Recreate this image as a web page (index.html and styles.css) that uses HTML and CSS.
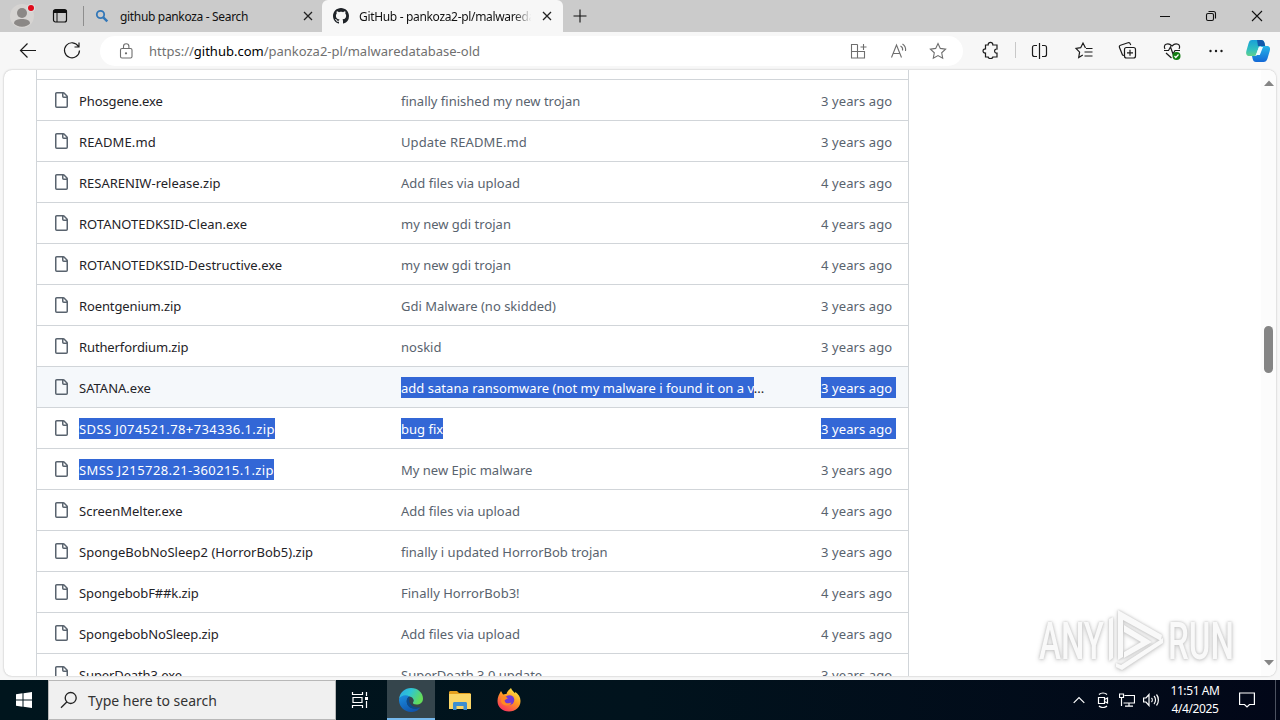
FILE: index.html
```html
<!DOCTYPE html>
<html lang="en">
<head>
    <meta charset="UTF-8">
    <meta name="viewport" content="width=device-width, initial-scale=1.0">
    <title>GitHub - pankoza2-pl/malwaredatabase-old</title>
    <link rel="stylesheet" href="styles.css">
</head>
<body>
    <svg class="defs" width="0" height="0">
        <symbol id="file" viewBox="0 0 16 16">
            <path d="M2 1.75C2 .784 2.784 0 3.75 0h6.586c.464 0 .909.184 1.237.513l2.914 2.914c.329.328.513.773.513 1.237v9.586A1.75 1.75 0 0 1 13.25 16h-9.5A1.75 1.75 0 0 1 2 14.25Zm1.75-.25a.25.25 0 0 0-.25.25v12.5c0 .138.112.25.25.25h9.5a.25.25 0 0 0 .25-.25V6h-2.75A1.75 1.75 0 0 1 9 4.25V1.5Zm6.75.062V4.25c0 .138.112.25.25.25h2.688l-.011-.013-2.914-2.914-.013-.011Z"/>
        </symbol>
    </svg>

    <div class="tabstrip">
        <svg class="profile" width="28" height="32" viewBox="0 0 28 32">
            <circle cx="14" cy="16" r="12" fill="#d6d4d2"/>
            <circle cx="14" cy="13" r="5" fill="#8b8886"/>
            <path d="M6 23.500c0-3.500 4-4.500 8-4.500s8 1 8 4.500c-1.500 2-4.500 3.200-8 3.200s-6.500-1.200-8-3.200z" fill="#8b8886"/>
            <circle cx="23" cy="8" r="4" fill="#dedede"/>
            <circle cx="23" cy="8" r="3" fill="#e00b1c"/>
        </svg>
        <svg class="workspace" width="16" height="16" viewBox="0 0 16 16" fill="none" stroke="#111">
            <rect x="1.500" y="1.500" width="13" height="12.500" rx="2" stroke-width="1.200"/>
            <path d="M1.500 3.500h13" stroke-width="3"/>
            <path d="M5 4v10"/>
        </svg>
        <div class="strip-line"></div>
        <div class="tab">
            <svg width="16" height="16" viewBox="0 0 16 16" fill="none" stroke="#3277b8">
                <circle cx="6.500" cy="6.500" r="3.700" stroke-width="1.800"/>
                <path d="M9.300 9.300l4 4" stroke-width="2.400"/>
            </svg>
            <span class="tab-title">github pankoza - Search</span>
            <svg class="tab-close" width="10" height="10" viewBox="0 0 10 10" stroke="#222" stroke-width="1.300"><path d="M1 1l8 8M9 1l-8 8"/></svg>
        </div>
        <div class="tab active">
            <svg width="16" height="16" viewBox="0 0 16 16" fill="#1f2328">
                <path d="M8 0C3.58 0 0 3.58 0 8c0 3.54 2.29 6.53 5.47 7.59.4.07.55-.17.55-.38 0-.19-.01-.82-.01-1.49-2.01.37-2.53-.49-2.69-.94-.09-.23-.48-.94-.82-1.13-.28-.15-.68-.52-.01-.53.63-.01 1.08.58 1.23.82.72 1.21 1.87.87 2.33.66.07-.52.28-.87.51-1.07-1.78-.2-3.64-.89-3.64-3.95 0-.87.31-1.59.82-2.15-.08-.2-.36-1.02.08-2.12 0 0 .67-.21 2.2.82.64-.18 1.32-.27 2-.27s1.36.09 2 .27c1.53-1.04 2.2-.82 2.2-.82.44 1.1.16 1.92.08 2.12.51.56.82 1.27.82 2.15 0 3.07-1.87 3.75-3.65 3.95.29.25.54.73.54 1.48 0 1.07-.01 1.93-.01 2.2 0 .21.15.46.55.38A8.01 8.01 0 0 0 16 8c0-4.42-3.58-8-8-8z"/>
            </svg>
            <span class="tab-title fade">GitHub - pankoza2-pl/malwaredatabase-old</span>
            <svg class="tab-close" width="10" height="10" viewBox="0 0 10 10" stroke="#222" stroke-width="1.300"><path d="M1 1l8 8M9 1l-8 8"/></svg>
        </div>
        <svg class="new-tab" width="14" height="14" viewBox="0 0 14 14" stroke="#111" stroke-width="1.100"><path d="M7 .5v13M.5 7h13"/></svg>
        <div class="window-buttons">
            <svg width="46" height="32" viewBox="0 0 46 32"><path d="M18 16.500h10" stroke="#111"/></svg>
            <svg width="46" height="32" viewBox="0 0 46 32" fill="none" stroke="#111" stroke-width="1.100">
                <rect x="18.500" y="13.500" width="7" height="7" rx="1.500"/>
                <path d="M20.500 11.500h5a2 2 0 0 1 2 2v5"/>
            </svg>
            <svg width="46" height="32" viewBox="0 0 46 32" stroke="#111" stroke-width="1.100"><path d="M18 11l10 10M28 11l-10 10"/></svg>
        </div>
    </div>

    <div class="toolbar">
        <svg class="tool" viewBox="0 0 44 36"><path d="M30 18.500H14.500M21.500 11.500l-7 7 7 7"/></svg>
        <svg class="tool" viewBox="0 0 44 36"><path d="M28.500 14.500a7.500 7.500 0 1 0 1 4M29 10.500v4.500h-4.500"/></svg>
        <div class="address">
            <svg class="lock" width="20" height="20" viewBox="0 0 20 20">
                <rect x="4.500" y="7.500" width="11.500" height="9.500" rx="1.500"/>
                <path d="M7.500 7.500V5.500a2.700 2.700 0 0 1 5.400 0v2"/>
                <circle cx="10" cy="12.300" r=".6"/>
            </svg>
            <span class="url">https://<b>github.com</b>/pankoza2-pl/malwaredatabase-old</span>
            <svg class="small-tool" viewBox="0 0 40 30">
                <path d="M19.500 8.500h-6v13.500h13v-6.500h-13M19.500 8.500V22M25.500 8v6M22.500 11h6"/>
            </svg>
            <svg class="small-tool" viewBox="0 0 40 30">
                <path d="M13.500 21.500l5-12.500 5 12.500M15.200 17.500h6.600M22.500 10a4 4 0 0 1 2 4.500M24.500 8a7 7 0 0 1 3 7"/>
            </svg>
            <svg class="small-tool" viewBox="0 0 40 30">
                <path d="M20 7.500l2.300 4.900 5.300.7-3.900 3.700 1 5.400-4.700-2.600-4.700 2.600 1-5.400-3.900-3.700 5.300-.7z"/>
            </svg>
        </div>
        <svg class="tool extensions" viewBox="0 0 44 36">
            <path d="M16.500 13h2.700c-.4-3.600 5-3.600 4.600 0h4.200v4c-3.200-.4-3.200 4.600 0 4.200v3.800h-4.200c.2 2-4.600 2-4.600 0h-2.700v-4c-3.300.4-3.300-4.400 0-4z"/>
        </svg>
        <div class="tool-line"></div>
        <svg class="tool" viewBox="0 0 44 36">
            <path d="M19 13.500h-2.500a2 2 0 0 0-2 2v7a2 2 0 0 0 2 2H19M24 13.500h2.500a2 2 0 0 1 2 2v7a2 2 0 0 1-2 2H24M21.500 11v16"/>
        </svg>
        <svg class="tool" viewBox="0 0 44 36">
            <path d="M23.500 16l-2.500-5-2.300 4.700-4.700.8 3.600 3.700-.9 5.300 4.100-2.500M24 16.500h6.500M22.500 20h8M22.500 24h8"/>
        </svg>
        <svg class="tool" viewBox="0 0 44 36">
            <path d="M18 23.500l-1.500-.5-3-7.500c-.4-1 0-2 1-2.300l7.500-2.400c1-.3 2 .2 2.300 1.100l.4 1.100"/>
            <rect x="18.500" y="15.500" width="11" height="10.500" rx="2"/>
            <path d="M24 17.800v6M21 20.800h6"/>
        </svg>
        <svg class="tool" viewBox="0 0 44 36">
            <path d="M15 17c-2.500-4.500 3-7 7-3 4-4 9.500-1.500 7 3M14 18.500h4.500l2-3.500 2.500 7 2-3.500h5M16 21l5.500 5"/>
            <circle class="ok" cx="26.500" cy="24" r="4"/>
            <path class="check" d="M24.500 24l1.300 1.500 2.700-3"/>
        </svg>
        <svg class="tool dots" viewBox="0 0 44 36">
            <circle cx="16.500" cy="19" r="1.200"/><circle cx="22" cy="19" r="1.200"/><circle cx="27.500" cy="19" r="1.200"/>
        </svg>
        <svg class="copilot" width="40" height="36" viewBox="0 0 40 36">
            <defs>
                <linearGradient id="cpLeft" x1="0" y1="0" x2="0" y2="1"><stop offset="0" stop-color="#18a0d8"/><stop offset=".6" stop-color="#31c0bf"/><stop offset="1" stop-color="#62d08b"/></linearGradient>
                <linearGradient id="cpRight" x1="0" y1="0" x2="0" y2="1"><stop offset="0" stop-color="#25b5e8"/><stop offset="1" stop-color="#1368d6"/></linearGradient>
            </defs>
            <path d="M14 8h9c2 0 3 1 3.500 3l.7 3H23c-1.500 0-2.200 1-2.700 2.500L18.500 22c-.5 1.300-1 2-2.500 2h-4.500c-3 0-4-2-3-5.500l2-7C11.200 9 12 8 14 8z" fill="url(#cpLeft)"/>
            <path d="M19 8h4c2 0 3 1 3.500 3l.7 3H20z" fill="#1259ab"/>
            <path d="M27 14h2c3 0 3.500 2.500 2.700 5l-2.200 7.500c-.8 2.500-2 3.500-4 3.500h-7.500c-2 0-2.800-1-3.300-3l-.7-3H17c1.500 0 2-.8 2.500-2l1.900-5.500c.5-1.500 1.100-2.500 2.600-2.500z" fill="url(#cpRight)"/>
            <path d="M21 15h4l-3.200 8h-4z" fill="#f0fbff"/>
        </svg>
    </div>

    <div class="page">
        <div class="files">
            <div class="row stub"></div>
            <div class="row"><svg><use href="#file"/></svg><span class="name tight">Phosgene.exe</span><span class="message">finally finished my new trojan</span><span class="age">3 years ago</span></div>
            <div class="row"><svg><use href="#file"/></svg><span class="name loose">README.md</span><span class="message loose">Update README.md</span><span class="age">3 years ago</span></div>
            <div class="row"><svg><use href="#file"/></svg><span class="name">RESARENIW-release.zip</span><span class="message">Add files via upload</span><span class="age">4 years ago</span></div>
            <div class="row"><svg><use href="#file"/></svg><span class="name">ROTANOTEDKSID-Clean.exe</span><span class="message">my new gdi trojan</span><span class="age">4 years ago</span></div>
            <div class="row"><svg><use href="#file"/></svg><span class="name">ROTANOTEDKSID-Destructive.exe</span><span class="message">my new gdi trojan</span><span class="age">4 years ago</span></div>
            <div class="row"><svg><use href="#file"/></svg><span class="name tight">Roentgenium.zip</span><span class="message">Gdi Malware (no skidded)</span><span class="age">3 years ago</span></div>
            <div class="row"><svg><use href="#file"/></svg><span class="name tight">Rutherfordium.zip</span><span class="message">noskid</span><span class="age">3 years ago</span></div>
            <div class="row hover"><svg><use href="#file"/></svg><span class="name">SATANA.exe</span><span class="message selected"><mark>add satana ransomware (not my malware i found it on a v</mark>...</span><span class="age"><mark class="wide">3 years ago</mark></span></div>
            <div class="row"><svg><use href="#file"/></svg><span class="name digits"><mark>SDSS J074521.78+734336.1.zip</mark></span><span class="message"><mark>bug fix</mark></span><span class="age"><mark class="wide">3 years ago</mark></span></div>
            <div class="row"><svg><use href="#file"/></svg><span class="name digits"><mark>SMSS J215728.21-360215.1.zip</mark></span><span class="message">My new Epic malware</span><span class="age">3 years ago</span></div>
            <div class="row"><svg><use href="#file"/></svg><span class="name">ScreenMelter.exe</span><span class="message">Add files via upload</span><span class="age">4 years ago</span></div>
            <div class="row"><svg><use href="#file"/></svg><span class="name">SpongeBobNoSleep2 (HorrorBob5).zip</span><span class="message">finally i updated HorrorBob trojan</span><span class="age">3 years ago</span></div>
            <div class="row"><svg><use href="#file"/></svg><span class="name tight">SpongebobF##k.zip</span><span class="message">Finally HorrorBob3!</span><span class="age">4 years ago</span></div>
            <div class="row"><svg><use href="#file"/></svg><span class="name tight">SpongebobNoSleep.zip</span><span class="message">Add files via upload</span><span class="age">4 years ago</span></div>
            <div class="row"><svg><use href="#file"/></svg><span class="name tight">SuperDeath3.exe</span><span class="message">SuperDeath 3.0 update</span><span class="age">3 years ago</span></div>
        </div>
        <div class="scrollbar">
            <svg width="10" height="6" viewBox="0 0 10 6"><path d="M0 6l5-5.500L10 6z"/></svg>
            <div class="thumb"></div>
            <svg width="10" height="6" viewBox="0 0 10 6"><path d="M0 0l5 5.500L10 0z"/></svg>
        </div>
        <svg class="watermark" width="210" height="72" viewBox="0 0 210 72">
            <text x="7" y="53" textLength="65" lengthAdjust="spacingAndGlyphs">ANY</text>
            <text x="136" y="53" textLength="66" lengthAdjust="spacingAndGlyphs">RUN</text>
            <g>
                <path d="M81 11v41l-4 3V13z"/>
                <path d="M86 4l44 25-1 6-38-21v37l-5 3z"/>
                <path d="M131 32v5L90 64l-6-3v-4l5 2z"/>
                <path d="M92 19l28 17-28 16v-6l17-10-17-10z"/>
            </g>
        </svg>
    </div>

    <div class="taskbar">
        <div class="start">
            <svg width="16" height="16" viewBox="0 0 16 16" fill="#fff"><path d="M0 2.200L6.500 1.300V7.500H0zM7.500 1.200L16 0v7.500H7.500zM0 8.500h6.500v6.200L0 13.800zM7.500 8.500H16V16l-8.500-1.200z"/></svg>
        </div>
        <div class="searchbox">
            <svg width="18" height="18" viewBox="0 0 18 18" fill="none" stroke="#222" stroke-width="1.300"><circle cx="10.700" cy="7" r="5.500"/><path d="M6.800 11L1 16.800"/></svg>
            <span>Type here to search</span>
        </div>
        <div class="task taskview">
            <svg width="18" height="16" viewBox="0 0 18 16" fill="none" stroke="#fff" stroke-width="1.200">
                <path d="M1.500 0v2.500h10V0M1.500 16v-2.500h10V16M2 5.500h9v5H2zM15.500 0v4M15.500 9v7"/>
                <path d="M14 5h3v3h-3z" fill="#fff" stroke="none"/>
            </svg>
        </div>
        <div class="task running">
            <svg width="24" height="24" viewBox="0 0 24 24">
                <defs>
                    <linearGradient id="edgeTop" x1="0" y1="0" x2="1" y2=".4"><stop offset="0" stop-color="#2aa5e8"/><stop offset=".5" stop-color="#2fc6d3"/><stop offset="1" stop-color="#63dc59"/></linearGradient>
                    <linearGradient id="edgeLow" x1="0" y1="0" x2=".6" y2="1"><stop offset="0" stop-color="#1b8ee0"/><stop offset="1" stop-color="#1054ac"/></linearGradient>
                </defs>
                <path d="M0 11C1 4 6 0 12 0c7 0 12 5 12 10.500 0 4-3 6-6.500 6-2.500 0-4-1-3.500-2 1.500-2 .5-5.500-4-6C6 8 2 8.500 0 11z" fill="url(#edgeTop)"/>
                <path d="M0 11c2-4 7-5 10.500-2.500C7 10 7 15 9.500 18c3 3.500 8 3.300 12 1.200C19 23 15.500 24 12 24 5 24-.5 18 0 11z" fill="url(#edgeLow)"/>
                <path d="M10.500 8.500C7 10 7 15 9.500 18c3 3.500 8 3.300 12 1.200-3.500.8-8-.2-10-3-1.800-2.500-1-5.500-1-7.700z" fill="#0b4a8d"/>
                <path d="M10.500 12c.5-1.500 3.200-1.500 3.800 0 .3 1-.3 1.800-.5 2.500-.2.700.2 1.400 1 1.900-3 .3-4.800-2-4.300-4.400z" fill="#35454c"/>
            </svg>
        </div>
        <div class="task">
            <svg width="22" height="20" viewBox="0 0 22 20">
                <path d="M0 2.500C0 1.500.7 1 1.500 1H8l2 2h11.500v4H0z" fill="#e5a01f"/>
                <path d="M0 4h22v15H0z" fill="#fbd667"/>
                <path d="M4 20v-6.500c0-1 .6-1.500 1.500-1.500h11c.9 0 1.500.5 1.500 1.500V20h-3.500v-4h-7v4z" fill="#3d8ed0"/>
            </svg>
        </div>
        <div class="task">
            <svg width="24" height="24" viewBox="0 0 24 24">
                <defs>
                    <linearGradient id="fox" x1=".8" y1="0" x2=".2" y2="1"><stop offset="0" stop-color="#fff04a"/><stop offset=".45" stop-color="#ff9a23"/><stop offset="1" stop-color="#f72a62"/></linearGradient>
                </defs>
                <path d="M4 3l2 3.500c1-.5 2.500-.7 3.500-.5C10 4 12 1.500 14 0c.5 2 2 3.200 4 5.200.3-.4.300-.9.200-1.400C21.500 6.500 23.500 9 23.500 13c0 6-5 10.500-11.500 10.500S.5 19 .5 13C.5 9 2 6.500 4 3z" fill="url(#fox)"/>
                <circle cx="12.500" cy="12" r="4.800" fill="#7139d6"/>
                <path d="M4.500 9c3-1 5 0 6.500 1.500-1.500.2-2.500 1.500-4.500 2 1.500 3 5 3.500 8 2-1.500 4.500-9.500 4-10.500-1z" fill="#ff8a22"/>
            </svg>
        </div>
        <div class="tray">
            <svg width="12" height="8" viewBox="0 0 12 8"><path d="M.7 6.800L6 1.500l5.300 5.300"/></svg>
            <svg class="meet" width="12" height="16" viewBox="0 0 12 16"><path d="M1.500 5.500h6v6h-6zM7.500 7.500l3-1.500v5l-3-1.500M2 2.500c2-2 6-2 8 0M2 14c2 2 6 2 8 0"/></svg>
            <svg class="net" width="16" height="14" viewBox="0 0 16 14"><path d="M5.500 2.500h10v7.500H4.500M10 10v3M6 13.200h8M.5 1h4v3.500h-4zM2.500 4.500v8.500"/></svg>
            <svg class="vol" width="17" height="14" viewBox="0 0 17 14"><path d="M.6 5h2.400l3-3.500v11L3 9H.6zM8.500 5c1 1 1 3 0 4M11 3c2 2 2 6 0 8M13.500 1.500c2.500 3 2.500 8 0 11"/></svg>
            <div class="clock"><span>11:51 AM</span><span>4/4/2025</span></div>
            <svg class="notify" width="16" height="16" viewBox="0 0 16 16"><path d="M.6 1h14.800v11.500H10.500L8 15l-2.500-2.500H.6z"/></svg>
            <div class="peek"></div>
        </div>
    </div>
</body>
</html>
```
FILE: styles.css
```css
* {
    margin: 0;
    padding: 0;
    box-sizing: border-box;
}

body {
    width: 1280px;
    height: 720px;
    overflow: hidden;
    display: flex;
    flex-direction: column;
    font-family: 'Noto Sans', 'Open Sans', sans-serif;
    font-size: 13px;
    background: #f7f7f7;
    color: #1f2328;
}

svg {
    flex: none;
    display: block;
}

.defs {
    position: absolute;
}

/* Tabs */
.tabstrip {
    height: 32px;
    flex: none;
    display: flex;
    align-items: center;
    background: #cbcbcb;
}

.profile {
    margin-left: 8px;
}

.workspace {
    margin-left: 16px;
}

.strip-line {
    width: 1px;
    height: 20px;
    margin-left: 15px;
    background: #8e8e8e;
}

.tab {
    height: 32px;
    display: flex;
    align-items: center;
    width: 238px;
    padding: 0 9px 0 10px;
    font-size: 12px;
    letter-spacing: -0.33px;
    white-space: nowrap;
    color: #111;
}

.tab.active {
    width: 241px;
    padding: 0 11px;
    background: #f7f7f7;
    border-radius: 6px 6px 0 0;
}

.tab-title {
    margin-left: 10px;
    width: 176px;
    overflow: hidden;
}

.fade {
    -webkit-mask-image: linear-gradient(to right, #000 88%, transparent 98%);
    mask-image: linear-gradient(to right, #000 88%, transparent 98%);
}

.tab-close {
    margin-left: auto;
}

.new-tab {
    margin-left: 10px;
}

.window-buttons {
    margin-left: auto;
    display: flex;
}

/* Toolbar */
.toolbar {
    height: 38px;
    flex: none;
    display: flex;
    align-items: center;
    padding: 0 2px 2px 6px;
    background: #f7f7f7;
}

.tool {
    width: 44px;
    height: 36px;
    fill: none;
    stroke: #1b1b1b;
    stroke-width: 1.2;
}

.address {
    width: 863px;
    height: 30px;
    margin: 2px 0 0 6px;
    padding: 0 5px 0 16px;
    display: flex;
    align-items: center;
    background: #fff;
    border-radius: 15px;
    font-size: 13px;
}

.lock,
.small-tool {
    fill: none;
    stroke: #6e6e6e;
    stroke-width: 1.1;
}

.small-tool {
    width: 40px;
    height: 30px;
}

.url {
    margin-left: 13px;
    margin-right: auto;
    color: #707070;
}

.url b {
    font-weight: 400;
    color: #000;
}

.extensions {
    margin-left: 6px;
}

.tool-line {
    width: 1px;
    height: 16px;
    margin: 0 2px;
    background: #c8c8c8;
}

.ok {
    fill: #107c10;
    stroke: none;
}

.check {
    stroke: #fff;
}

.dots {
    fill: #1b1b1b;
    stroke: none;
}

/* Repository page */
.page {
    position: relative;
    width: 1272px;
    height: 606px;
    flex: none;
    margin-left: 4px;
    display: flex;
    justify-content: space-between;
    overflow: hidden;
    background: #fff;
    border-radius: 8px;
    box-shadow: 0 0 2px rgba(0, 0, 0, 0.3);
}

.files {
    width: 873px;
    margin-left: 32px;
    border-left: 1px solid #d1d5d9;
    border-right: 1px solid #d1d5d9;
    flex: none;
}

.row {
    height: 41px;
    display: flex;
    align-items: center;
    padding-left: 16px;
    border-top: 1px solid #d1d5d9;
    white-space: nowrap;
}

.row.stub {
    height: 9px;
    border-top: none;
}

.row.hover {
    background: #f5f8fb;
}

.row svg {
    width: 16px;
    height: 16px;
    fill: #59636e;
}

.name {
    width: 322px;
    margin-left: 10px;
    padding-top: 2px;
}

.message {
    width: 420px;
    padding-top: 2px;
    color: #59636e;
}

.message.selected {
    letter-spacing: 0.03px;
    color: #1f2328;
}

.age {
    padding-top: 2px;
    letter-spacing: 0.09px;
    color: #59636e;
}

.tight {
    letter-spacing: -0.12px;
}

.loose {
    letter-spacing: 0.12px;
}

.digits {
    letter-spacing: 0.4px;
}

mark {
    padding: 2px 0 1px;
    background: #3367d6;
    color: #fff;
}

mark.wide {
    padding-right: 4px;
}

.scrollbar {
    width: 15px;
    padding: 10px 3px;
    display: flex;
    flex-direction: column;
    align-items: center;
    background: #fcfcfc;
    fill: #858585;
}

.thumb {
    width: 9px;
    height: 47px;
    margin: 240px 0 auto;
    border-radius: 5px;
    background: #858585;
}

.watermark {
    position: absolute;
    left: 1028px;
    top: 536px;
    font-family: Roboto, sans-serif;
    font-size: 52px;
    font-weight: 500;
    fill: #f9f9f9;
    filter: drop-shadow(0 0 1px #c4c4c4) drop-shadow(0 1px 2px #cfcfcf);
}

/* Taskbar */
.taskbar {
    height: 40px;
    flex: none;
    margin-top: 4px;
    display: flex;
    background: linear-gradient(to right, #00151d, #01131d 50%, #020718);
}

.start,
.task {
    width: 48px;
    display: flex;
    align-items: center;
    justify-content: center;
}

.searchbox {
    width: 288px;
    padding-left: 11px;
    display: flex;
    align-items: center;
    background: #f0f0f0;
    border: 1px solid #b8b8b8;
    font-size: 14px;
    color: #333;
}

.searchbox span {
    margin-left: 10px;
}

.task {
    margin-right: 1px;
}

.taskview {
    margin-right: 3px;
}

.running {
    background: #35454c;
    border-bottom: 2px solid #76b9ed;
    padding-top: 2px;
}

.tray {
    margin-left: auto;
    display: flex;
    align-items: center;
    fill: none;
    stroke: #fff;
    stroke-width: 1.2;
}

.meet {
    margin-left: 12px;
}

.net {
    margin-left: 10px;
}

.vol {
    margin-left: 8px;
}

.clock {
    width: 50px;
    margin-left: 10px;
    display: flex;
    flex-direction: column;
    align-items: center;
    font-size: 12px;
    line-height: 18px;
    letter-spacing: -0.4px;
    color: #fff;
    white-space: nowrap;
}

.notify {
    margin-left: 19px;
}

.peek {
    width: 1px;
    height: 40px;
    margin: 0 4px 0 20px;
    background: #4c5260;
}
```
